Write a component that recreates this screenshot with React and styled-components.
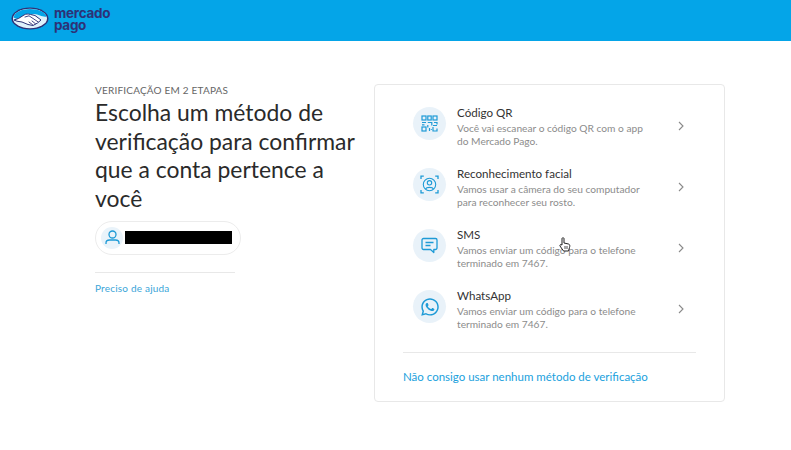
import React from "react";
import styled, { createGlobalStyle } from "styled-components";
import { FaWhatsapp } from "react-icons/fa";

const Global = createGlobalStyle`
  html, body { margin: 0; padding: 0; background: #fff; }
  body { font-family: "Lato", "Open Sans", sans-serif; width: 791px; height: 450px; overflow: hidden; }
`;
const Page = styled.div`position: relative; width: 791px; height: 450px;`;
const Header = styled.header`
  height: 41px; background: #04a5e8; display: flex; align-items: center; padding-left: 11px; padding-bottom: 4px; box-sizing: border-box;
`;
const LogoText = styled.div`
  margin-left: 5px; color: #2d3277; font-family: "Inter", sans-serif; font-weight: 700; font-size: 13.5px; line-height: 12px; letter-spacing: -0.3px;
`;
const Main = styled.main`display: flex; padding: 43px 0 0 95px; align-items: flex-start;`;
const Left = styled.section`width: 265px; margin-right: 14px;`;
const Eyebrow = styled.div`font-size: 10px; line-height: 12px; color: #666; margin-bottom: 2px; letter-spacing: 0.02em;`;
const Title = styled.h1`
  margin: 0; font-size: 22.9px; line-height: 28.7px; font-weight: 400; color: #2a2a2a;
`;
const UserPill = styled.div`
  margin-top: 8px; width: 146px; height: 34px; box-sizing: border-box; border: 1px solid #ececec; border-radius: 17px;
  display: flex; align-items: center; padding-left: 5px;
`;
const Avatar = styled.div`
  width: 22px; height: 22px; border-radius: 50%; background: #e9f3fa; display: flex; align-items: center; justify-content: center; margin-right: 2px;
`;
const Redacted = styled.div`width: 107px; height: 13px; background: #000;`;
const Divider = styled.div`width: ${p => p.$w}px; height: 1px; background: #e8e8e8;`;
const LeftDivider = styled(Divider)`margin: 17px 0 9px;`;
const HelpLink = styled.a`display: block; font-size: 10px; line-height: 12px; color: #3aa5d8; letter-spacing: 0.02em;`;
const Card = styled.section`
  width: 351px; height: 318px; box-sizing: border-box; border: 1px solid #e8e8e8; border-radius: 4px; padding: 8px 28px 0; 
`;
const Rows = styled.div`display: flex; flex-direction: column; margin-bottom: 15px;`;
const Row = styled.div`
  height: 61px; display: flex; align-items: center; padding-left: 10px; position: relative;
`;
const IconCircle = styled.div`
  width: 33px; height: 33px; border-radius: 50%; background: #e9f2f9; display: flex; align-items: center; justify-content: center; color: #1d9ad6; flex: none;
`;
const RowText = styled.div`margin-left: 11px; width: 208px; margin-top: 6px;`;
const RowTitle = styled.div`font-size: 11.6px; line-height: 15px; color: #333; margin-bottom: 2px;`;
const RowDesc = styled.div`font-size: 10.2px; line-height: 13px; color: #8c8c8c;`;
const Chevron = styled.svg`margin-left: auto; margin-right: 12px; margin-top: 4px; flex: none;`;
const BottomLink = styled.a`display: block; margin-top: 17px; font-size: 11.5px; line-height: 14px; color: #1aa1dd;`;
const Cursor = styled.svg`position: absolute; left: 559px; top: 237px;`;

const Logo = () => (
  <svg width="38" height="23" viewBox="0 0 38 23">
    <ellipse cx="19" cy="11.5" rx="18.5" ry="11" fill="#2d3277" />
    <ellipse cx="19" cy="11.5" rx="17" ry="9.7" fill="#dff1fb" />
    <path d="M2.5 10.5 C5 12 7 12.5 9 11 L14 7.5 C16 6.5 18 6.8 20 7.5 C23 6.5 26 7 29 8.5 C31 9.5 34 10 35.5 9.5 C34.5 5.5 28 2 19 2 C10 2 3.5 5.5 2.5 10.5Z" fill="#04a5e8" />
    <path d="M3 13 L7.5 11.5 L13 8 C15 6.8 17 6.8 19.5 7.5 L24 8.5 L30 13 L26.5 16 L22 18.5 L17 17.5 L11 15 L6 14.2Z" fill="#fff" stroke="#2d3277" strokeWidth="1" strokeLinejoin="round" />
    <path d="M14 10 L18 8.8 L27 14.8 M21 14 L24.5 16.8 M18 15 L21.5 17.6" stroke="#2d3277" strokeWidth="0.9" fill="none" strokeLinecap="round" />
  </svg>
);

const QrIcon = () => (
  <svg width="17" height="17" viewBox="0 0 17 17" fill="none" stroke="currentColor" strokeWidth="1.2">
    <rect x="1" y="1" width="4" height="4" />
    <rect x="6.8" y="1" width="3.4" height="4" />
    <rect x="12" y="1" width="4" height="4" />
    <rect x="1" y="12" width="4" height="4" />
    <path d="M1 7.5h4M1 9.8h2.5M6.8 7.5h4v3M6.8 10v2.5M8.5 13v3M13 7.5h3v2M12 10.5h4M12 12v4h4v-2.5M9.8 14.5h1" />
  </svg>
);
const FaceIcon = () => (
  <svg width="19" height="19" viewBox="0 0 19 19" fill="none" stroke="currentColor" strokeWidth="1.1">
    <circle cx="9.5" cy="9.5" r="6.2" />
    <circle cx="9.5" cy="7.8" r="2.2" />
    <path d="M5.5 14 C6.5 11.8 12.5 11.8 13.5 14" />
    <path d="M1 4V1.2H3.8M15.2 1.2H18V4M1 15V17.8H3.8M15.2 17.8H18V15" strokeWidth="1.3" />
  </svg>
);
const SmsIcon = () => (
  <svg width="17" height="17" viewBox="0 0 17 17" fill="none" stroke="currentColor" strokeWidth="1.3">
    <path d="M2.5 1.5H14.5A1.5 1.5 0 0 1 16 3V11A1.5 1.5 0 0 1 14.5 12.5H12.8V15.5L9.5 12.5H2.5A1.5 1.5 0 0 1 1 11V3A1.5 1.5 0 0 1 2.5 1.5Z" strokeLinejoin="round" />
    <path d="M4.5 5.5H12.5M4.5 8.5H9.5" />
  </svg>
);
const UserIcon = () => (
  <svg width="15" height="15" viewBox="0 0 15 15" fill="none" stroke="#1d9ad6" strokeWidth="1.3">
    <circle cx="7.5" cy="4.5" r="3.5" />
    <path d="M1 14V13C1 11 2.5 10 4.5 10H10.5C12.5 10 14 11 14 13V14" />
  </svg>
);
const ChevronIcon = () => (
  <Chevron width="6" height="10" viewBox="0 0 6 10" fill="none" stroke="#8a8a8a" strokeWidth="1.1">
    <path d="M1 1L5 5L1 9" />
  </Chevron>
);

const methods = [
  { icon: <QrIcon />, title: "Código QR", lines: ["Você vai escanear o código QR com o app", "do Mercado Pago."] },
  { icon: <FaceIcon />, title: "Reconhecimento facial", lines: ["Vamos usar a câmera do seu computador", "para reconhecer seu rosto."] },
  { icon: <SmsIcon />, title: "SMS", lines: ["Vamos enviar um código para o telefone", "terminado em 7467."] },
  { icon: <FaWhatsapp size={20} />, title: "WhatsApp", lines: ["Vamos enviar um código para o telefone", "terminado em 7467."] },
];

export default function App() {
  return (
    <Page>
      <Global />
      <Header>
        <Logo />
        <LogoText>mercado<br />pago</LogoText>
      </Header>
      <Main>
        <Left>
          <Eyebrow>VERIFICAÇÃO EM 2 ETAPAS</Eyebrow>
          <Title>Escolha um método de verificação para confirmar que a conta pertence a você</Title>
          <UserPill>
            <Avatar><UserIcon /></Avatar>
            <Redacted />
          </UserPill>
          <LeftDivider $w={140} />
          <HelpLink>Preciso de ajuda</HelpLink>
        </Left>
        <Card>
          <Rows>
            {methods.map(m => (
              <Row key={m.title}>
                <IconCircle>{m.icon}</IconCircle>
                <RowText>
                  <RowTitle>{m.title}</RowTitle>
                  <RowDesc>{m.lines[0]}<br />{m.lines[1]}</RowDesc>
                </RowText>
                <ChevronIcon />
              </Row>
            ))}
          </Rows>
          <Divider $w={293} />
          <BottomLink>Não consigo usar nenhum método de verificação</BottomLink>
        </Card>
      </Main>
      <Cursor width="12" height="15" viewBox="0 0 12 15" fill="#fff" stroke="#222" strokeWidth="1">
        <path d="M3 1.5C3 .5 5 .5 5 1.5V6L9.5 7C11 7.5 11 9 10.5 10.5L9.5 14H4.5L1 9C.5 8 1.5 7 3 8Z" />
        <path d="M6 9V12M8 9V12" strokeWidth="0.8" />
      </Cursor>
    </Page>
  );
}
